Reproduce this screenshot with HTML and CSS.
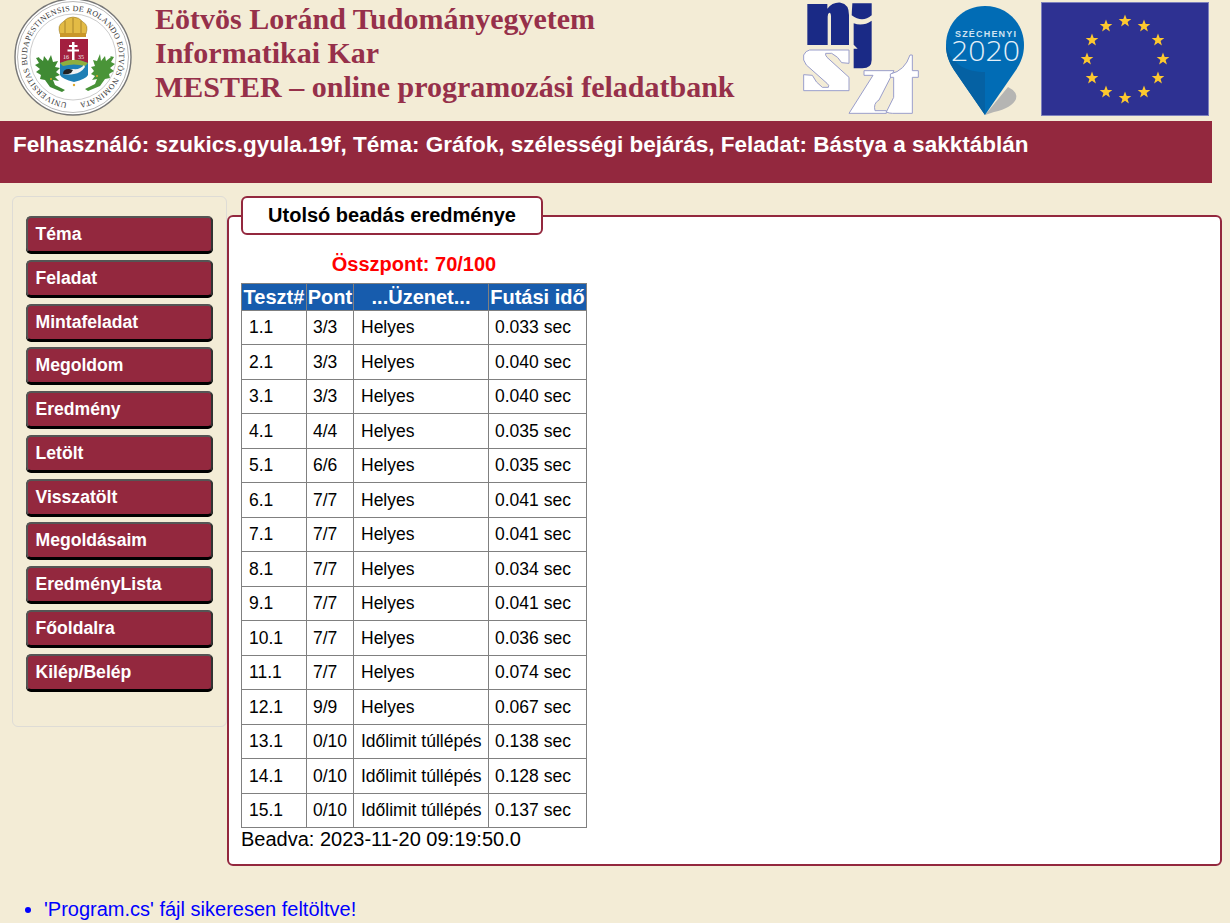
FILE: index.html
```html
<!DOCTYPE html>
<html lang="hu">
<head>
    <meta charset="UTF-8">
    <meta name="viewport" content="width=device-width, initial-scale=1.0">
    <title>MESTER - online programozási feladatbank</title>
    <link rel="stylesheet" href="styles.css">
</head>
<body>
    <header class="header">
        <svg class="seal" viewBox="0 0 120 120" width="120" height="120">
            <defs>
                <path id="sealRing" d="M 60 106 a 46 46 0 1 1 0 -92 a 46 46 0 1 1 0 92"/>
            </defs>
            <circle cx="60" cy="60" r="58" fill="#fff" stroke="#777" stroke-width="1.4"/>
            <circle cx="60" cy="60" r="55.500" fill="none" stroke="#999" stroke-width=".7"/>
            <circle cx="60" cy="60" r="43" fill="none" stroke="#aaa" stroke-width=".6"/>
            <text class="seal-text"><textPath href="#sealRing" startOffset="6" textLength="276" lengthAdjust="spacing">UNIVERSITAS BUDAPESTINENSIS DE ROLANDO EÖTVÖS NOMINATA</textPath></text>
            <!-- crown -->
            <path d="M47 37 q-3 -9 3 -12 q4 -5 10 -5 q6 0 10 5 q6 3 3 12 z" fill="#e3bb45" stroke="#8a6d1e" stroke-width=".5"/>
            <path d="M52 36 v-12 M60 36 v-15 M68 36 v-12" stroke="#a8842a" stroke-width="1" fill="none"/>
            <rect x="47" y="36" width="26" height="4" fill="#c9972a"/>
            <!-- shield -->
            <path d="M47 42 h28 v26 h-28 z" fill="#a31f3f"/>
            <path d="M47 66 q14 -6 28 0 v12 q-2 4 -14 7 q-12 -3 -14 -7 z" fill="#1f7fb5"/>
            <path d="M47 66 q14 -7 28 0 l-3 3 q-11 -3 -22 0 z" fill="#8fae3e"/>
            <path d="M59 45 h2.500 v3 h3 v2 h-3 v2.500 h4.500 v2 h-4.500 v8.500 h-2.500 v-8.500 h-4.500 v-2 h4.500 v-2.500 h-3 v-2 h3 z" fill="#fff"/>
            <text class="seal-year" x="50" y="62">16</text>
            <text class="seal-year" x="65" y="62">35</text>
            <path d="M50 77 q3 -4 10 -5 q7 1 11 -4 l1 2 q-4 6 -11 7 q-6 1 -11 0 z" fill="#f3f3f3"/>
            <path d="M50 77 q0 -5 6 -5 l4 1 l-2 3 q-4 2 -8 1 z" fill="#222"/>
            <!-- branches -->
            <path d="M25 60 l5 4 l1 -5 l4 5 l3 -6 l2 7 l5 -1 l-3 6 l5 1 l-4 4 l4 3 l-5 2 l4 4 l-6 -1 l2 5 l10 5 l-3 2 l-12 -5 l-5 -7 l-5 -1 l1 -4 l-5 -3 l4 -3 l-5 -4 l4 -2 l-3 -5 l4 -1 z" fill="#3f8a33"/>
            <path d="M98 60 l-5 4 l-1 -5 l-4 5 l-1 -7 l-3 7 l-4 -1 l2 6 l-4 1 l3 4 l-3 3 l4 2 l-3 4 l5 -1 l-2 5 l-10 5 l3 2 l12 -5 l5 -7 l5 -1 l-1 -4 l5 -3 l-4 -3 l5 -4 l-4 -2 l3 -5 l-4 -1 z" fill="#4a9438"/>
            <circle cx="38" cy="82" r="1" fill="#e0a92c"/>
            <circle cx="84" cy="79" r="1" fill="#e0a92c"/>
            <circle cx="61" cy="88" r="1.200" fill="#e0a92c"/>
        </svg>
        <div class="title">
            <div>Eötvös Loránd Tudományegyetem</div>
            <div>Informatikai Kar</div>
            <div>MESTER – online programozási feladatbank</div>
        </div>
        <svg class="logo-njszt" viewBox="0 0 375 360" width="125" height="120">
            <path d="M25 12 H85 V26 Q100 6 125 8 Q150 12 150 45 V135 H96 V50 Q96 38 91 38 Q86 40 86 50 V135 H25 Z" fill="#1a2a86"/>
            <path d="M160 10 H218 V46 Q190 70 158 46 Z" fill="#1a2a86"/>
            <path d="M164 70 Q192 80 218 62 V180 Q218 205 190 205 H164 V146 L176 146 L164 134 Z" fill="#1a2a86"/>
            <g fill="#fff" stroke="#9a9ecb" stroke-width="3">
                <path d="M32 150 H150 V190 L128 188 Q118 170 98 160 H80 Q78 165 84 172 L150 232 V272 H14 V224 L40 226 Q50 248 70 262 H88 Q92 256 84 250 L22 195 Q10 180 14 165 Q20 152 32 150 Z"/>
                <path d="M195 212 H285 L240 300 Q222 310 228 332 H262 V340 H150 L222 226 H195 Z"/>
                <path d="M333 165 H340 V212 H358 V232 H340 V340 H280 Q270 340 262 336 L284 292 V232 H274 V222 Q318 212 333 165 Z"/>
            </g>
        </svg>
        <svg class="logo-szechenyi" viewBox="0 0 90 120" width="90" height="120">
            <path d="M45 115 L68 87 Q78 92 76 99 Q72 108 54 112 z" fill="#b5b5b3"/>
            <path d="M45 6 C23 6 6 23 6 45 C6 55 9 62 14 70 L45 115 L76 70 C81 62 84 55 84 45 C84 23 67 6 45 6 z" fill="#016cb5"/>
            <path d="M6 45 C6 55 9 62 14 70 L45 115 V72 C28 72 12 66 6 45 z" fill="#0561a3"/>
            <text class="sz-name" x="15" y="37" textLength="61" lengthAdjust="spacing">SZÉCHENYI</text>
            <text class="sz-year" x="11" y="61" textLength="69" lengthAdjust="spacingAndGlyphs">2020</text>
        </svg>
        <svg class="logo-eu" viewBox="0 0 168 114" width="168" height="114">
            <rect x=".5" y=".5" width="167" height="113" fill="#2e3192" stroke="#7d80bd"/>
            <defs><path id="euStar" d="M0 -6.500 L1.700 -2.100 L6.300 -2.100 L2.600 .9 L3.900 5.500 L0 2.800 L-3.900 5.500 L-2.600 .9 L-6.300 -2.100 L-1.700 -2.100 z" fill="#fdc82f"/></defs>
            <use href="#euStar" x="84" y="19"/>
            <use href="#euStar" x="103" y="24"/>
            <use href="#euStar" x="117" y="38"/>
            <use href="#euStar" x="122" y="57"/>
            <use href="#euStar" x="117" y="76"/>
            <use href="#euStar" x="103" y="90"/>
            <use href="#euStar" x="84" y="96"/>
            <use href="#euStar" x="65" y="90"/>
            <use href="#euStar" x="51" y="76"/>
            <use href="#euStar" x="46" y="57"/>
            <use href="#euStar" x="51" y="38"/>
            <use href="#euStar" x="65" y="24"/>
        </svg>
    </header>

    <div class="banner">Felhasználó: szukics.gyula.19f, Téma: Gráfok, szélességi bejárás, Feladat: Bástya a sakktáblán</div>

    <div class="content">
        <nav class="sidebar">
            <a class="menu-btn" href="#">Téma</a>
            <a class="menu-btn" href="#">Feladat</a>
            <a class="menu-btn" href="#">Mintafeladat</a>
            <a class="menu-btn" href="#">Megoldom</a>
            <a class="menu-btn" href="#">Eredmény</a>
            <a class="menu-btn" href="#">Letölt</a>
            <a class="menu-btn" href="#">Visszatölt</a>
            <a class="menu-btn" href="#">Megoldásaim</a>
            <a class="menu-btn" href="#">EredményLista</a>
            <a class="menu-btn" href="#">Főoldalra</a>
            <a class="menu-btn" href="#">Kilép/Belép</a>
        </nav>

        <fieldset class="result-box">
            <legend><span class="legend-tab">Utolsó beadás eredménye</span></legend>
            <table class="results">
                <caption>Összpont: 70/100</caption>
                <thead>
                    <tr><th class="col-test">Teszt#</th><th class="col-point">Pont</th><th class="col-msg">...Üzenet...</th><th class="col-time">Futási idő</th></tr>
                </thead>
                <tbody>
                    <tr><td>1.1</td><td>3/3</td><td>Helyes</td><td>0.033 sec</td></tr>
                    <tr><td>2.1</td><td>3/3</td><td>Helyes</td><td>0.040 sec</td></tr>
                    <tr><td>3.1</td><td>3/3</td><td>Helyes</td><td>0.040 sec</td></tr>
                    <tr><td>4.1</td><td>4/4</td><td>Helyes</td><td>0.035 sec</td></tr>
                    <tr><td>5.1</td><td>6/6</td><td>Helyes</td><td>0.035 sec</td></tr>
                    <tr><td>6.1</td><td>7/7</td><td>Helyes</td><td>0.041 sec</td></tr>
                    <tr><td>7.1</td><td>7/7</td><td>Helyes</td><td>0.041 sec</td></tr>
                    <tr><td>8.1</td><td>7/7</td><td>Helyes</td><td>0.034 sec</td></tr>
                    <tr><td>9.1</td><td>7/7</td><td>Helyes</td><td>0.041 sec</td></tr>
                    <tr><td>10.1</td><td>7/7</td><td>Helyes</td><td>0.036 sec</td></tr>
                    <tr><td>11.1</td><td>7/7</td><td>Helyes</td><td>0.074 sec</td></tr>
                    <tr><td>12.1</td><td>9/9</td><td>Helyes</td><td>0.067 sec</td></tr>
                    <tr><td>13.1</td><td>0/10</td><td>Időlimit túllépés</td><td>0.138 sec</td></tr>
                    <tr><td>14.1</td><td>0/10</td><td>Időlimit túllépés</td><td>0.128 sec</td></tr>
                    <tr><td>15.1</td><td>0/10</td><td>Időlimit túllépés</td><td>0.137 sec</td></tr>
                </tbody>
            </table>
            <div class="submitted">Beadva: 2023-11-20 09:19:50.0</div>
        </fieldset>
    </div>

    <ul class="messages">
        <li>'Program.cs' fájl sikeresen feltöltve!</li>
    </ul>
</body>
</html>
```

FILE: styles.css
```css
html {
    overflow: hidden;
}
body {
    margin: 0;
    height: 923px;
    overflow: hidden;
    font-family: "Liberation Sans", Arial, sans-serif;
    background-color: #f3ecd6;
    color: #000;
}
.header {
    display: flex;
    align-items: flex-start;
    height: 121px;
    padding-left: 12px;
}
.seal {
    flex: none;
    margin-top: -3px;
    margin-left: 1px;
}
.seal-text {
    font-family: "Liberation Serif", serif;
    font-size: 8px;
    fill: #333;
}
.seal-year {
    font-family: "Liberation Serif", serif;
    font-size: 6px;
    fill: #eee;
}
.title {
    flex: none;
    width: 644px;
    margin-left: 22px;
    padding-top: 2px;
    font-family: "Liberation Serif", serif;
    font-weight: bold;
    font-size: 30px;
    line-height: 34px;
    color: #96304a;
}
.logo-njszt {
    flex: none;
}
.logo-szechenyi {
    flex: none;
    margin-left: 16px;
}
.logo-eu {
    flex: none;
    margin-left: 11px;
    margin-top: 2px;
}
.sz-name {
    font-size: 9px;
    font-weight: bold;
    fill: #cfe3f2;
}
.sz-year {
    font-family: "Open Sans", sans-serif;
    font-size: 27px;
    font-weight: 300;
    fill: #e4f0f8;
}
.banner {
    width: 1212px;
    height: 62px;
    padding: 11px 0 0 13px;
    box-sizing: border-box;
    background-color: #93283e;
    color: white;
    font-size: 22.500px;
    font-weight: bold;
    line-height: 26px;
}
.content {
    display: flex;
    align-items: flex-start;
    margin-top: 13px;
    padding-left: 12px;
}
.sidebar {
    flex: none;
    width: 215px;
    height: 531px;
    box-sizing: border-box;
    padding: 19px 13px 0 13px;
    border: 1px solid #dedcd6;
    border-radius: 6px;
}
.menu-btn {
    display: block;
    height: 37px;
    margin-bottom: 6.750px;
    padding-left: 7.500px;
    box-sizing: border-box;
    background-color: #93283e;
    border: 2px solid;
    border-color: #555 #333 #000 #555;
    border-radius: 5px;
    box-shadow: 0 1px 0 #000;
    color: white;
    font-size: 17.600px;
    font-weight: bold;
    line-height: 32px;
    text-decoration: none;
}
.result-box {
    flex: none;
    width: 995px;
    height: 670px;
    margin: 0;
    padding: 0 0 0 12px;
    box-sizing: border-box;
    background-color: white;
    border: 2px solid #93283e;
    border-radius: 6px;
}
.result-box legend {
    padding: 0;
}
.legend-tab {
    display: block;
    width: 302px;
    height: 39px;
    box-sizing: border-box;
    background-color: white;
    border: 2px solid #93283e;
    border-radius: 6px;
    font-size: 20px;
    font-weight: bold;
    line-height: 35px;
    text-align: center;
}
.results {
    border-collapse: collapse;
    margin-top: 8px;
    table-layout: fixed;
    width: 346px;
    font-size: 17.500px;
}
.results caption {
    height: 40px;
    font-size: 20px;
    font-weight: bold;
    line-height: 43px;
    color: #f00;
}
.results th {
    height: 25.900px;
    padding: 0;
    background-color: #175cad;
    border: 1px solid #808080;
    color: white;
    font-size: 20px;
    line-height: 20px;
}
.results td {
    height: 33.500px;
    padding: 0 0 0 6px;
    border: 1px solid #808080;
}
.results td:first-child {
    padding-left: 7px;
}
.results td:nth-child(3) {
    padding-left: 7px;
}
.col-test {
    width: 64px;
}
.col-point {
    width: 46px;
}
.col-msg {
    width: 134px;
}
.submitted {
    font-size: 20px;
    line-height: 23px;
}
.messages {
    margin: 32px 0 0 0;
    padding-left: 44px;
    color: #00f;
    font-size: 20px;
    line-height: 23px;
}
```
